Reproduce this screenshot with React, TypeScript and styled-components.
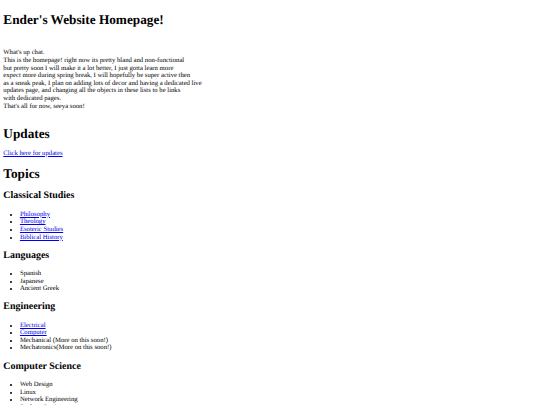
import React from 'react';
import styled, { createGlobalStyle } from 'styled-components';

// A plain default-styled HTML document, shown at roughly 0.415 scale.
const GlobalStyle = createGlobalStyle`
  html, body {
    background: #ffffff;
  }

  body {
    margin: 3.32px;
    font-family: 'Liberation Serif', 'Times New Roman', serif;
    font-size: 6.7px;
    line-height: 7.63px;
    color: #000000;
    text-rendering: geometricPrecision;
  }
`;

const Page = styled.main`
  display: block;
`;

const Heading = styled.h1`
  font-size: 13.28px;
  line-height: 15.26px;
  font-weight: bold;
  margin: 8.9px 0;
`;

const Intro = styled.p`
  margin: 6.64px 0;
  padding: 13px 0 6.4px;
`;

const LinkLine = styled.p`
  margin: 6.64px 0;
`;

const TopicTitle = styled.h2`
  font-size: 9.96px;
  line-height: 11.6px;
  font-weight: bold;
  margin: 8.6px 0;
`;

const TopicList = styled.ul`
  margin: 6.64px 0;
  padding-left: 16.6px;
  list-style: disc;
`;

const Link = styled.a`
  color: #0000ee;
  text-decoration: underline;
`;

interface Topic {
  title: string;
  items: { label: string; link?: boolean }[];
}

const introLines = [
  "What's up chat.",
  'This is the homepage! right now its pretty bland and non-functional',
  'but pretty soon I will make it a lot better, I just gotta learn more',
  'expect more during spring break, I will hopefully be super active then',
  'as a sneak peak, I plan on adding lots of decor and having a dedicated live',
  'updates page, and changing all the objects in these lists to be links',
  'with dedicated pages.',
  "That's all for now, seeya soon!",
];

const topics: Topic[] = [
  {
    title: 'Classical Studies',
    items: [
      { label: 'Philosophy', link: true },
      { label: 'Theology', link: true },
      { label: 'Esoteric Studies', link: true },
      { label: 'Biblical History', link: true },
    ],
  },
  {
    title: 'Languages',
    items: [{ label: 'Spanish' }, { label: 'Japanese' }, { label: 'Ancient Greek' }],
  },
  {
    title: 'Engineering',
    items: [
      { label: 'Electrical', link: true },
      { label: 'Computer', link: true },
      { label: 'Mechanical (More on this soon!)' },
      { label: 'Mechatronics(More on this soon!)' },
    ],
  },
  {
    title: 'Computer Science',
    items: [
      { label: 'Web Design' },
      { label: 'Linux' },
      { label: 'Network Engineering' },
      { label: 'Desktop Design' },
    ],
  },
];

export default function App() {
  return (
    <>
      <GlobalStyle />
      <Page>
        <Heading>Ender&apos;s Website Homepage!</Heading>
        <Intro>
          {introLines.map((line, index) => (
            <React.Fragment key={`line-${index}`}>
              {line}
              {index < introLines.length - 1 && <br />}
            </React.Fragment>
          ))}
        </Intro>
        <Heading>Updates</Heading>
        <LinkLine>
          <Link href="#updates">Click here for updates</Link>
        </LinkLine>
        <Heading>Topics</Heading>
        {topics.map((topic) => (
          <section key={topic.title}>
            <TopicTitle>{topic.title}</TopicTitle>
            <TopicList>
              {topic.items.map((item) => (
                <li key={item.label}>
                  {item.link ? <Link href="#">{item.label}</Link> : item.label}
                </li>
              ))}
            </TopicList>
          </section>
        ))}
      </Page>
    </>
  );
}
